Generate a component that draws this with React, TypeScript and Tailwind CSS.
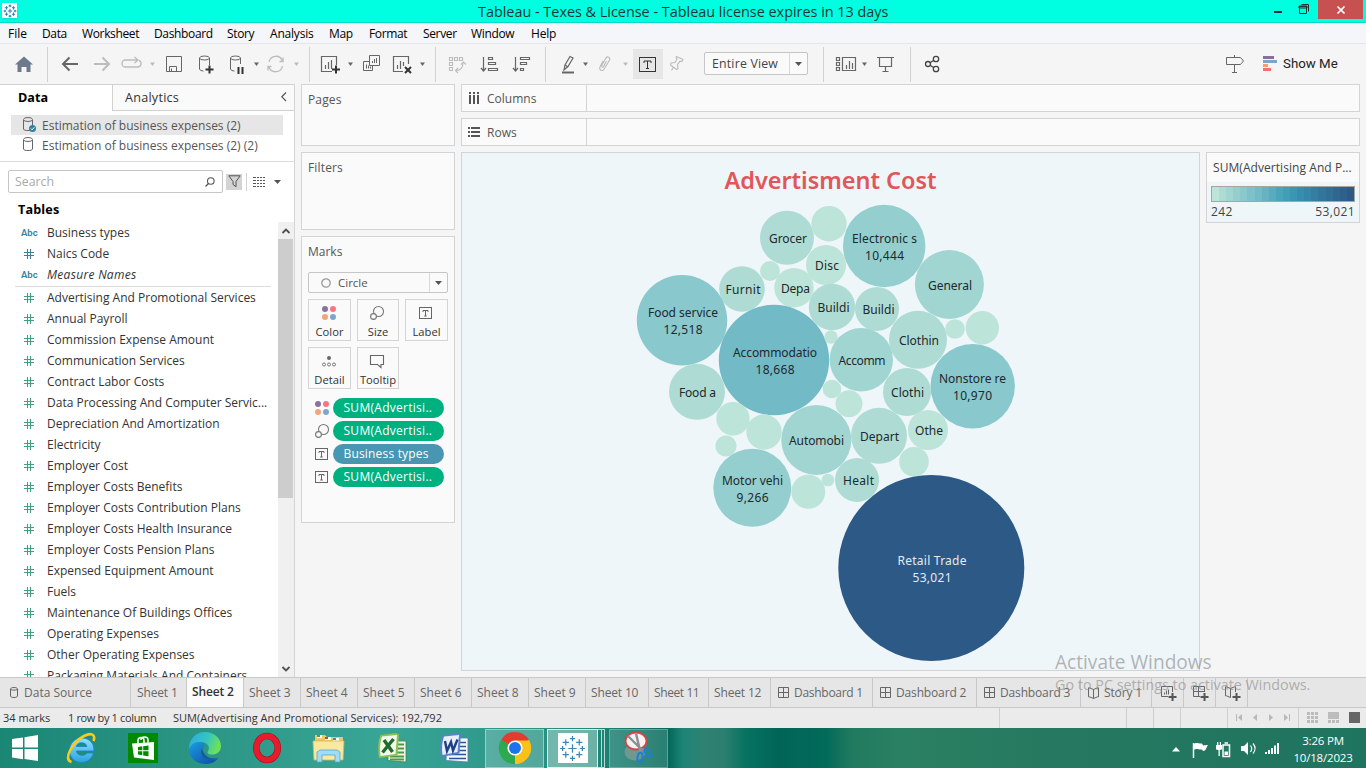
import React from "react";

type Kids = { children?: React.ReactNode };

const SANS = "font-['Open_Sans','Noto_Sans',sans-serif]";

/* ---------- shared glyphs ---------- */

function Svg({ w, h, children, className = "" }: Kids & { w: number; h: number; className?: string }) {
  return (
    <svg
      width={w}
      height={h}
      viewBox={`0 0 ${w} ${h}`}
      fill="none"
      className={`block shrink-0 overflow-visible ${className}`}
    >
      {children}
    </svg>
  );
}

function Caret({ x, muted = false }: { x: number; muted?: boolean }) {
  return <path d={`M${x} 18.500h5l-2.500 3.500z`} fill={muted ? "#bcbcbc" : "#666"} />;
}

function TextMark({ s = "#666" }: { s?: string }) {
  return (
    <Svg w={13} h={12}>
      <rect x="0.5" y="0.5" width="12" height="11" stroke={s} />
      <path d="M4 5V3.500h5V5M6.500 3.500V9M5.200 9h2.600" stroke={s} />
    </Svg>
  );
}

function SizeMark() {
  return (
    <Svg w={14} h={14}>
      <circle cx="8.500" cy="5.500" r="5" stroke="#777" strokeWidth="1.100" />
      <circle cx="3.500" cy="10.500" r="2.900" stroke="#777" strokeWidth="1.100" fill="#fafafa" />
    </Svg>
  );
}

function ColorMark() {
  return (
    <Svg w={14} h={14}>
      <circle cx="3" cy="3" r="3" fill="#8a739b" />
      <circle cx="11" cy="3" r="3" fill="#fb7485" />
      <circle cx="3" cy="11" r="3" fill="#f3a47b" />
      <circle cx="11" cy="11" r="3" fill="#80a5cc" />
    </Svg>
  );
}

function TableauMark({ size, light = false }: { size: number; light?: boolean }) {
  return (
    <svg width={size} height={size} viewBox="0 0 26 26" fill="none" className="block shrink-0">
      <path
        d="M13 9v8M9 13h8M13 1v5M10.500 3.500h5M13 20v5M10.500 22.500h5M3.500 10.500v5M1 13h5M22.500 10.500v5M20 13h5M6.500 4v6M3.500 7h6M19.500 4v6M16.500 7h6M6.500 16v6M3.500 19h6M19.500 16v6M16.500 19h6"
        stroke={light ? "#3b87b4" : "#2f7fb2"}
        strokeWidth={light ? 1.2 : 1.9}
      />
    </svg>
  );
}

/* ---------- window chrome ---------- */

function TitleBar() {
  return (
    <header className="flex h-[23px] shrink-0 border-b border-[#00dcc6] bg-[#00ffe1]">
      <div className="mt-[3px] ml-[2px] flex h-[15px] w-[15px] items-center justify-center bg-white shadow-sm">
        <TableauMark size={14} />
      </div>
      <div className="ml-[461px] w-[420px] text-[14.4px] leading-[23px] whitespace-nowrap text-[#153531]">
        Tableau - Texes &amp; License - Tableau license expires in 13 days
      </div>
      <div className="ml-auto flex">
        <Svg w={44} h={22}>
          <path d="M0 11h8v2h-8z" fill="#163431" />
          <path d="M25.500 6.500h7v7h-7z M25 6h8v2h-8z M27.500 4.500h7v7" stroke="#163431" />
        </Svg>
        <div className="flex h-[19px] w-[45px] items-center justify-center bg-[#c75050]">
          <Svg w={8} h={8}>
            <path d="M0.500 0.500l7 7M7.500 0.500l-7 7" stroke="white" strokeWidth="1.700" />
          </Svg>
        </div>
        <div className="w-[3px]" />
      </div>
    </header>
  );
}

function MenuBar() {
  return (
    <nav className="flex h-[21px] shrink-0 border-b border-[#e6e6e6] bg-[#f4f6f9] pl-2 text-[12px] leading-[21px] tracking-[-0.350px] whitespace-nowrap text-black">
      <span className="w-[34px] tracking-normal">File</span>
      <span className="w-[40px]">Data</span>
      <span className="w-[72px]">Worksheet</span>
      <span className="w-[73px]">Dashboard</span>
      <span className="w-[43px]">Story</span>
      <span className="w-[59px] tracking-[-0.2px]">Analysis</span>
      <span className="w-[40px]">Map</span>
      <span className="w-[54px]">Format</span>
      <span className="w-[48px]">Server</span>
      <span className="w-[60px]">Window</span>
      <span className="tracking-[-0.2px]">Help</span>
    </nav>
  );
}

function Sep() {
  return <div className="mt-[3px] h-[35px] w-px shrink-0 bg-[#d2d2d2]" />;
}

function ToolBar() {
  const c = "#666";
  const m = "#bcbcbc";
  return (
    <div className="flex h-[40px] shrink-0 bg-[#f5f5f5]">
      <Svg w={47} h={40}>
        <path d="M24 12.500l9 8h-2.500v7.500h-4v-5h-5v5h-4v-7.500H15z" fill="#6d7a8a" />
      </Svg>
      <Sep />
      <Svg w={108} h={40}>
        <path d="M30 20H15M21.500 13.500L15 20l6.500 6.500" stroke={c} strokeWidth="2" />
        <path d="M46 20h15M54.500 13.500L61 20l-6.500 6.500" stroke={m} strokeWidth="2" />
        <path d="M85 16h-7.500a3.500 3.500 0 0 0 0 7h12a3.500 3.500 0 0 0 1.500-6.700M83 16h6M86.500 13l3.500 3-3.500 3" stroke={m} strokeWidth="1.300" />
        <Caret x={102} muted />
      </Svg>
      <Svg w={153} h={40}>
        <path d="M10.500 12.500h15v15h-15zM13.500 27v-4.500h7v4.500M15.500 27v-2.500" stroke={c} />
        <path d="M43.500 14v11c0 1 2 2 4 2M53.500 14v7" stroke={c} />
        <ellipse cx="48.500" cy="14" rx="5" ry="2" stroke={c} />
        <path d="M53.500 21.500v8M49.500 25.500h8" stroke="#333" strokeWidth="2" />
        <path d="M74.500 14v11c0 1 2 2 4 2M84.500 14v6" stroke={c} />
        <ellipse cx="79.500" cy="14" rx="5" ry="2" stroke={c} />
        <path d="M82.500 23v7M86.500 23v7" stroke="#333" strokeWidth="2" />
        <Caret x={98} />
        <path
          d="M113 18a7 7 0 0 1 13.500-1M126.500 22a7 7 0 0 1-13.500 1M123.500 17.500h3.500v-4M115.500 22.500h-3.500v4"
          stroke={m}
          strokeWidth="1.300"
        />
        <Caret x={138} muted />
      </Svg>
      <Sep />
      <Svg w={125} h={40}>
        <path d="M26.500 21v-8.500h-15v15H22M15.500 25v-4M18.500 25v-7M21.500 25v-9" stroke={c} strokeWidth="1.200" />
        <path d="M26 21.500v8M22 25.500h8" stroke="#333" strokeWidth="2" />
        <Caret x={38} />
        <path
          d="M59.500 11.500h10v10h-10zM62.500 19v-2M64.500 19v-4M66.500 19v-5M59 17.500h-5.500v9h9V22M56.500 24.500v-4M58.500 24.500v-3M60.500 24.500v-2"
          stroke={c}
        />
        <path d="M98.500 20v-7.500h-15v15H93M87.500 25v-4M90.500 25v-8M93.500 22v-4" stroke={c} strokeWidth="1.200" />
        <path d="M95 23l6 6M101 23l-6 6" stroke="#333" strokeWidth="2" />
        <Caret x={110} />
      </Svg>
      <Sep />
      <Svg w={109} h={40}>
        <path
          d="M13.500 13.500h3v3h-3zM18.500 13.500h3v3h-3zM23.500 13.500h3v3h-3zM13.500 18.500h3v3h-3zM13.500 23.500h3v3h-3zM20 26.500c5 0 7-3 7-8M25 20.500l2.500-2.500 2.500 2.500M22 24l-2.500 2.500L22 29"
          stroke={m}
          strokeWidth="1.100"
        />
        <path d="M47.500 13v13M45 24l2.500 3 2.500-3M52.500 13.500h4v2h-4zM52.500 18.500h7v2h-7zM52.500 24.500h9v2h-9z" stroke={c} strokeWidth="1.200" />
        <path d="M79.500 13v13M77 24l2.500 3 2.500-3M84.500 13.500h9v2h-9zM84.500 18.500h6v2h-6zM84.500 24.500h3v2h-3z" stroke={c} strokeWidth="1.200" />
      </Svg>
      <Sep />
      <Svg w={87} h={40}>
        <path d="M18 26l1-5 5-8.500 3 1.500-5 8.500zM19 21l3 2" stroke={c} strokeWidth="1.200" />
        <path d="M16 28.500h12" stroke={c} strokeWidth="2" />
        <Caret x={37} />
        <path
          d="M57 17l-3 6c-1.200 3 2.300 4.800 4 2.300l5.500-9c1.200-3-2-4.500-3.700-2.200l-4 7.500c-.5 1.700 1 2 1.700 1l3-5.500"
          stroke={m}
          strokeWidth="1.100"
        />
        <Caret x={77} muted />
      </Svg>
      <div className="mt-[5px] flex h-[30px] w-[30px] shrink-0 items-center bg-[#e6e6e6] pl-[6px]">
        <Svg w={17} h={15}>
          <rect x="0.500" y="0.500" width="16" height="14" stroke="#333" />
          <path d="M5 6V4h7v2M8.500 4v7M7 11.500h3" stroke="#333" />
        </Svg>
      </div>
      <Svg w={41} h={40}>
        <path d="M13.500 12.500l6.500 3-1 2-2-.3-2.500 3.300.5 4-1.500 1-6-4.500.5-2 4-.5 2-3.500-1-1.500zM10.500 23L8.500 26.500" stroke={m} strokeWidth="1.100" />
      </Svg>
      <div className="mt-2 flex h-[23px] w-[104px] shrink-0 rounded-[2px] border border-[#c6c6c6] bg-[#fafafa]">
        <span className="flex-1 pl-[7px] text-[12.300px] leading-[21px] tracking-[0.2px] whitespace-nowrap text-[#444]">
          Entire View
        </span>
        <span className="flex w-[18px] items-center justify-center border-l border-[#d8d8d8]">
          <Svg w={7} h={4}>
            <path d="M0 0h7l-3.500 4z" fill="#555" />
          </Svg>
        </span>
      </div>
      <div className="w-[15px]" />
      <Sep />
      <Svg w={86} h={40}>
        <path
          d="M12.500 13.500h3v3h-3zM12.500 18.500h3v3h-3zM12.500 23.500h3v3h-3zM18.500 13.500h13v13h-13zM22.500 25v-4M25.500 25v-8M28.500 25v-6"
          stroke={c}
          strokeWidth="1.200"
        />
        <Caret x={38} />
        <path d="M53 13.500h17M55.500 14v8.500h12V14M61.500 23v4.500M58.500 27.500h6" stroke={c} strokeWidth="1.200" />
      </Svg>
      <Sep />
      <Svg w={40} h={40}>
        <g stroke="#444" strokeWidth="1.300">
          <circle cx="17" cy="20" r="2.500" />
          <circle cx="25" cy="15" r="2.700" />
          <circle cx="25" cy="25" r="2.700" />
          <path d="M19 18.700l4-2.500M19 21.300l4 2.500" />
        </g>
      </Svg>
      <div className="flex-1" />
      <Svg w={37} h={40}>
        <path d="M0.500 13.500h14l3 3.500-3 3.500h-14zM8.500 11v2M8.500 21v7.500M6 28.500h5" stroke={c} />
      </Svg>
      <Svg w={20} h={40}>
        <path d="M0 12h11v3H0z" fill="#8a6f9a" />
        <path d="M0 16h14v3H0z" fill="#7fa3cc" />
        <path d="M0 20h5v3H0z" fill="#f3a06f" />
        <path d="M0 24h8v3H0z" fill="#f96c7d" />
      </Svg>
      <span className="w-[83px] font-['Roboto',sans-serif] text-[13.300px] leading-[39px] whitespace-nowrap text-[#222]">
        Show Me
      </span>
    </div>
  );
}

/* ---------- data pane ---------- */

function Cylinder({ checked = false }: { checked?: boolean }) {
  return (
    <Svg w={14} h={16}>
      <path d="M0.500 3v9c0 1 2 1.500 4.500 1.500S9.500 13 9.500 12V3" stroke="#666" />
      <ellipse cx="5" cy="2.500" rx="4.500" ry="2" stroke="#666" />
      {checked && (
        <>
          <circle cx="9.500" cy="11.500" r="3.500" fill="#34809f" />
          <path d="M7.800 11.500l1.300 1.300 2.200-2.500" stroke="white" />
        </>
      )}
    </Svg>
  );
}

function Hash({ color }: { color: string }) {
  return (
    <Svg w={10} h={10}>
      <path d="M3.500 0v10M6.500 0v10M0 3.500h10M0 6.500h10" stroke={color} strokeWidth="1.050" />
    </Svg>
  );
}

function Field({ name, kind, italic = false }: { name: string; kind: "abc" | "dim" | "measure"; italic?: boolean }) {
  return (
    <li className="flex h-[21px] items-center">
      <span className="flex w-[47px] shrink-0 items-center pl-[21px]">
        {kind === "abc" && (
          <span className="pt-px font-['Roboto',sans-serif] text-[9.500px] leading-none font-semibold text-[#34809f]">
            Abc
          </span>
        )}
        {kind !== "abc" && (
          <span className="pl-[3px]">
            <Hash color={kind === "dim" ? "#3b7f9c" : "#3fa07e"} />
          </span>
        )}
      </span>
      <span className={italic ? "pt-px whitespace-nowrap italic tracking-[0.3px]" : "pt-px whitespace-nowrap"}>
        {name}
      </span>
    </li>
  );
}

const MEASURES = [
  "Advertising And Promotional Services",
  "Annual Payroll",
  "Commission Expense Amount",
  "Communication Services",
  "Contract Labor Costs",
  "Data Processing And Computer Servic...",
  "Depreciation And Amortization",
  "Electricity",
  "Employer Cost",
  "Employer Costs Benefits",
  "Employer Costs Contribution Plans",
  "Employer Costs Health Insurance",
  "Employer Costs Pension Plans",
  "Expensed Equipment Amount",
  "Fuels",
  "Maintenance Of Buildings Offices",
  "Operating Expenses",
  "Other Operating Expenses",
  "Packaging Materials And Containers",
];

function DataPane() {
  return (
    <aside className="flex h-full w-[295px] shrink-0 flex-col border-r border-[#d4d4d4] bg-white text-[12px] text-[#333]">
      <div className="flex h-[27px] shrink-0 border-t border-[#d0d0d0] leading-[25px]">
        <div className="w-[112px] pl-[18px] text-[12.600px] font-bold text-black">Data</div>
        <div className="flex flex-1 border-b border-l border-[#d0d0d0] bg-[#fafafa] pl-3 text-[12.600px] tracking-[0.250px]">
          <span>Analytics</span>
          <Svg w={6} h={10} className="mt-[7px] mr-[7px] ml-auto">
            <path d="M5 0.500L0.800 4.800 5 9" stroke="#555" strokeWidth="1.200" />
          </Svg>
        </div>
      </div>
      <div className="h-[51px] shrink-0 border-b border-[#dcdcdc] pt-[4px] text-[12px] tracking-[0px] text-[#555]">
        <div className="ml-[11px] flex h-5 w-[272px] items-center gap-[5px] bg-[#e6e6e6] pl-3">
          <Cylinder checked />
          <span className="pt-px">Estimation of business expenses (2)</span>
        </div>
        <div className="ml-[11px] flex h-5 w-[272px] items-center gap-[5px] pl-3">
          <Cylinder />
          <span className="pt-px">Estimation of business expenses (2) (2)</span>
        </div>
      </div>
      <div className="mt-2 flex h-[23px] shrink-0 items-center pl-2">
        <div className="flex h-[23px] w-[215px] items-center justify-between rounded-[2px] border border-[#c6c6c6] pr-[7px] pl-[6px] text-[12.300px] text-[#aaa]">
          <span className="pt-px">Search</span>
          <Svg w={10} h={10}>
            <circle cx="5.800" cy="4" r="3.300" stroke="#555" strokeWidth="1.100" />
            <path d="M3.500 6.500L0.500 9.500" stroke="#555" strokeWidth="1.300" />
          </Svg>
        </div>
        <div className="ml-[3px] flex h-4 w-4 items-center justify-center bg-[#d4d4d4]">
          <Svg w={13} h={13}>
            <path d="M0.800 0.800h11.400L8 6.500v5.300L5 9.500v-3z" stroke="#555" />
          </Svg>
        </div>
        <div className="ml-1 h-[18px] w-px bg-[#d4d4d4]" />
        <Svg w={12} h={10} className="ml-[6px]">
          <path d="M0 .5h12M0 3.500h12M0 6.500h12M0 9.500h12" stroke="#555" strokeDasharray="3 1 2 1 2 1 2 0" />
        </Svg>
        <Svg w={7} h={4} className="ml-[9px]">
          <path d="M0 0h7l-3.500 4z" fill="#555" />
        </Svg>
      </div>
      <div className="mt-[6px] mb-px h-[22px] shrink-0 pl-[18px] text-[12.600px] leading-[22px] font-bold tracking-[0.150px] text-black">
        Tables
      </div>
      <div className="flex min-h-0 flex-1">
        <div className="min-w-0 flex-1 overflow-hidden">
          <ul>
            <Field name="Business types" kind="abc" />
            <Field name="Naics Code" kind="dim" />
            <Field name="Measure Names" kind="abc" italic />
          </ul>
          <div className="mt-px ml-[15px] h-px w-[256px] bg-[#dcdcdc]" />
          <ul>
            {MEASURES.map((m) => (
              <Field key={m} name={m} kind="measure" />
            ))}
          </ul>
        </div>
        <div className="flex w-[16px] shrink-0 flex-col items-center bg-[#f0f0f0]">
          <Svg w={8} h={6} className="mt-[6px]">
            <path d="M0.500 5L4 1.500 7.500 5" stroke="#505050" strokeWidth="1.800" />
          </Svg>
          <div className="mt-[5px] h-[259px] w-[15px] self-start bg-[#cdcdcd]" />
          <Svg w={8} h={6} className="mt-auto mb-[5px]">
            <path d="M0.500 1L4 4.500 7.500 1" stroke="#505050" strokeWidth="1.800" />
          </Svg>
        </div>
      </div>
    </aside>
  );
}

/* ---------- cards ---------- */

const CARD = "border border-[#d4d4d4] bg-[#fafafa]";

function MarkButton({ label, children }: Kids & { label: string }) {
  return (
    <div className="flex h-[42px] flex-col items-center border border-[#d4d4d4] text-[11.200px] text-[#333]">
      <div className="flex h-[26px] items-center pr-[2px]">{children}</div>
      <span className="leading-[12px] whitespace-nowrap">{label}</span>
    </div>
  );
}

function Pill({ label, blue = false, children }: Kids & { label: string; blue?: boolean }) {
  return (
    <div className="flex h-[20px] items-center">
      <span className="flex w-[18px] shrink-0 items-center">{children}</span>
      <span
        className={
          blue
            ? "h-5 w-[111px] rounded-full bg-[#4996b2] pl-[10.500px] leading-[20px] tracking-[0.180px] text-white"
            : "h-5 w-[111px] rounded-full bg-[#00b180] pl-[10.500px] leading-[20px] tracking-[0.280px] text-white"
        }
      >
        {label}
      </span>
    </div>
  );
}

function Cards() {
  return (
    <div className="flex w-[154px] shrink-0 flex-col gap-[6px] text-[12px] text-[#555]">
      <section className={`h-[62px] pt-[6px] pl-[6px] tracking-[0.150px] ${CARD}`}>Pages</section>
      <section className={`h-[78px] pt-[6px] pl-[6px] tracking-[0.150px] ${CARD}`}>Filters</section>
      <section className={`h-[287px] px-[6px] pt-[6px] ${CARD}`}>
        <h2 className="leading-[18px]">Marks</h2>
        <div className="mt-[11px] flex h-[21px] w-[140px] items-center rounded-[2px] border border-[#c6c6c6] pl-3 text-[11.500px]">
          <Svg w={10} h={10}>
            <circle cx="5" cy="5" r="4.200" stroke="#999" strokeWidth="1.300" />
          </Svg>
          <span className="ml-[7px] flex-1">Circle</span>
          <span className="flex h-full w-[18px] items-center justify-center border-l border-[#d8d8d8]">
            <Svg w={7} h={4}>
              <path d="M0 0h7l-3.500 4z" fill="#555" />
            </Svg>
          </span>
        </div>
        <div className="mt-[6px] grid w-[140px] grid-cols-[43px_42px_43px] gap-[6px]">
          <MarkButton label="Color">
            <ColorMark />
          </MarkButton>
          <MarkButton label="Size">
            <SizeMark />
          </MarkButton>
          <MarkButton label="Label">
            <TextMark />
          </MarkButton>
          <MarkButton label="Detail">
            <Svg w={14} h={11}>
              <circle cx="7" cy="2" r="2" fill="#666" />
              <g stroke="#777">
                <circle cx="2" cy="8.500" r="1.500" />
                <circle cx="7" cy="8.500" r="1.500" />
                <circle cx="12" cy="8.500" r="1.500" />
              </g>
            </Svg>
          </MarkButton>
          <MarkButton label="Tooltip">
            <Svg w={14} h={13}>
              <path d="M0.500 0.500h13v9h-2.500v3l-3.500-3h-7z" stroke="#666" strokeWidth="1.100" />
            </Svg>
          </MarkButton>
        </div>
        <div className="mt-[9px] flex flex-col gap-[3px] pl-[7px] text-[12px]">
          <Pill label="SUM(Advertisi..">
            <ColorMark />
          </Pill>
          <Pill label="SUM(Advertisi..">
            <SizeMark />
          </Pill>
          <Pill label="Business types" blue>
            <TextMark />
          </Pill>
          <Pill label="SUM(Advertisi..">
            <TextMark />
          </Pill>
        </div>
      </section>
    </div>
  );
}

function Shelf({ label, children }: Kids & { label: string }) {
  return (
    <div className={`flex h-7 ${CARD}`}>
      <div className="flex w-[125px] items-center gap-[7px] border-r border-[#d4d4d4] pl-[6px] text-[12px] text-[#555]">
        {children}
        <span className="pt-px">{label}</span>
      </div>
    </div>
  );
}

/* ---------- bubble chart ---------- */

const PALETTE = [
  "#bce4d8", "#aedcd5", "#a1d5d2", "#95cecf", "#89c8cc", "#7ec1ca", "#72bac6", "#66b2c2", "#59acbe", "#4ba5ba",
  "#419eb6", "#3b96b2", "#358ead", "#3586a7", "#347ea1", "#32779b", "#316f96", "#2f6790", "#2d608a", "#2c5985",
];

type Bubble = {
  x: number;
  y: number;
  r: number;
  c: number;
  name?: string;
  w?: number;
  value?: string;
  tx?: number;
  ty?: number;
};

const BUBBLES: Bubble[] = [
  { x: 787, y: 237.8, r: 27, c: 1, name: "Grocer", w: 38, tx: 788, ty: 243 },
  { x: 829, y: 223.7, r: 17.7, c: 0 },
  { x: 884.2, y: 246, r: 41.2, c: 3, name: "Electronic s", w: 65, value: "10,444", tx: 884.5, ty: 243 },
  { x: 826, y: 265, r: 20, c: 0, name: "Disc", w: 24, tx: 827, ty: 270 },
  { x: 770, y: 271, r: 10, c: 0 },
  { x: 742, y: 289, r: 22.8, c: 1, name: "Furnit", w: 35, tx: 743, ty: 294 },
  { x: 794, y: 287.8, r: 19.7, c: 0, name: "Depa", w: 29, tx: 795.5, ty: 293 },
  { x: 949.4, y: 284.5, r: 34.5, c: 2, name: "General", w: 44, tx: 950, ty: 290 },
  { x: 682, y: 320.3, r: 45.2, c: 4, name: "Food service", w: 70, value: "12,518", tx: 683, ty: 317 },
  { x: 832, y: 307, r: 23.2, c: 1, name: "Buildi", w: 32, tx: 833.5, ty: 312 },
  { x: 877, y: 309, r: 22, c: 1, name: "Buildi", w: 32, tx: 878.5, ty: 314 },
  { x: 774, y: 360, r: 55.2, c: 6, name: "Accommodatio", w: 84, value: "18,668", tx: 775, ty: 357 },
  { x: 831, y: 337, r: 6.7, c: 0 },
  { x: 861.3, y: 359.7, r: 31.7, c: 2, name: "Accomm", w: 47, tx: 862, ty: 365 },
  { x: 918, y: 339.7, r: 29, c: 1, name: "Clothin", w: 40, tx: 919, ty: 345 },
  { x: 955, y: 329, r: 9.8, c: 0 },
  { x: 982.3, y: 327.8, r: 16.7, c: 0 },
  { x: 972.7, y: 386.2, r: 42.2, c: 4, name: "Nonstore re", w: 67, value: "10,970", tx: 972.5, ty: 383 },
  { x: 697, y: 391.8, r: 28, c: 1, name: "Food a", w: 37, tx: 697.5, ty: 397 },
  { x: 832, y: 389, r: 9.3, c: 0 },
  { x: 907, y: 392, r: 24, c: 1, name: "Clothi", w: 33, tx: 907.5, ty: 397 },
  { x: 849, y: 403.8, r: 13.5, c: 0 },
  { x: 733, y: 418.7, r: 16.7, c: 0 },
  { x: 764, y: 432, r: 17.7, c: 0 },
  { x: 726, y: 446, r: 10.6, c: 0 },
  { x: 816.3, y: 440, r: 35, c: 2, name: "Automobi", w: 55, tx: 816.5, ty: 445 },
  { x: 879, y: 435.8, r: 28, c: 1, name: "Depart", w: 39, tx: 879.5, ty: 441 },
  { x: 928, y: 430, r: 20, c: 0, name: "Othe", w: 28, tx: 929, ty: 435 },
  { x: 914, y: 461.7, r: 14.8, c: 0 },
  { x: 857, y: 480, r: 22, c: 1, name: "Healt", w: 31, tx: 858.5, ty: 485 },
  { x: 752.3, y: 487.8, r: 39, c: 3, name: "Motor vehi", w: 61, value: "9,266", tx: 752.5, ty: 485 },
  { x: 808.3, y: 491.8, r: 17, c: 0 },
  { x: 828, y: 480, r: 6.3, c: 0 },
  { x: 931.3, y: 568, r: 93, c: 19, name: "Retail Trade", w: 69, value: "53,021", tx: 932, ty: 565 },
];

function BubbleChart() {
  return (
    <svg
      width={737}
      height={517}
      viewBox="462 153 737 517"
      className="block font-['Noto_Sans','Open_Sans',sans-serif]"
    >
      <text x={830.5} y={189} textLength={212} fontSize={23.5} fontWeight={600} textAnchor="middle" fill="#e15759">
        Advertisment Cost
      </text>
      {BUBBLES.map((b, i) => (
        <circle key={i} cx={b.x} cy={b.y} r={b.r} fill={PALETTE[b.c]} />
      ))}
      {BUBBLES.filter((b) => b.name).map((b, i) => {
        const fill = b.c > 10 ? "#e4ebf2" : "#1c2a2c";
        return (
          <g key={i} fill={fill} fontSize={12} textAnchor="middle">
            <text x={b.tx} y={b.ty} textLength={b.w}>
              {b.name}
            </text>
            {b.value && (
              <text x={b.tx} y={(b.ty ?? 0) + 17} textLength={b.value.length > 5 ? 39 : 32}>
                {b.value}
              </text>
            )}
          </g>
        );
      })}
    </svg>
  );
}

function Legend() {
  return (
    <aside className="h-[71px] w-[154px] shrink-0 border border-[#d4d4d4] bg-[#eef6fa] text-[12px] text-[#444]">
      <div className="h-[29px] bg-[#fafafa] pl-[6px] leading-[30px] tracking-[0.060px] whitespace-nowrap">
        SUM(Advertising And P...
      </div>
      <div className="mx-1 mt-1 flex h-4 border border-[#a8a59a]">
        {PALETTE.map((p) => (
          <span key={p} className="flex-1" style={{ background: p }} />
        ))}
      </div>
      <div className="flex justify-between px-1 leading-[19px] tracking-[0.400px]">
        <span>242</span>
        <span>53,021</span>
      </div>
    </aside>
  );
}

/* ---------- bottom bars ---------- */

function GridGlyph() {
  return (
    <Svg w={11} h={11}>
      <path d="M0.500 0.500h10v10h-10zM5.500 0v11M0 5.500h11" stroke="#666" />
    </Svg>
  );
}

function BookGlyph() {
  return (
    <Svg w={11} h={12}>
      <path d="M5.500 2.500L1.500.8H.5v9h1l4 1.700 4-1.700h1v-9h-1zv9" stroke="#666" />
    </Svg>
  );
}

const TAB = "flex h-full shrink-0 items-center border-r border-[#c8c8c8] whitespace-nowrap";

function SheetTabs() {
  return (
    <div className="flex h-[31px] shrink-0 border-t border-b border-[#c8c8c8] bg-[#e6e6e6] text-[12px] tracking-[-0.150px] text-[#666]">
      <div className={`${TAB} w-[131px] gap-[6px] pl-[10px] tracking-normal`}>
        <Svg w={8} h={11}>
          <path d="M0.500 2v7c0 2 7 2 7 0V2c0-2-7-2-7 0c0 1.500 7 1.500 7 0" stroke="#666" />
        </Svg>
        Data Source
      </div>
      <div className={`${TAB} w-[56px] pl-[6px]`}>Sheet 1</div>
      <div className={`${TAB} w-[57px] bg-[#fafafa] pb-[2px] pl-[5px] font-semibold text-[#333]`}>Sheet 2</div>
      <div className={`${TAB} w-[57px] pl-[5px] tracking-normal`}>Sheet 3</div>
      <div className={`${TAB} w-[57px] pl-[5px] tracking-normal`}>Sheet 4</div>
      <div className={`${TAB} w-[57px] pl-[5px] tracking-normal`}>Sheet 5</div>
      <div className={`${TAB} w-[57px] pl-[5px] tracking-normal`}>Sheet 6</div>
      <div className={`${TAB} w-[57px] pl-[5px] tracking-normal`}>Sheet 8</div>
      <div className={`${TAB} w-[57px] pl-[5px] tracking-normal`}>Sheet 9</div>
      <div className={`${TAB} w-[63px] pl-[5px]`}>Sheet 10</div>
      <div className={`${TAB} w-[60px] pl-[5px] tracking-[-0.4px]`}>Sheet 11</div>
      <div className={`${TAB} w-[62px] pl-[5px]`}>Sheet 12</div>
      <div className={`${TAB} w-[102px] gap-[5px] pl-[7px] tracking-[-0.280px]`}>
        <GridGlyph />
        Dashboard 1
      </div>
      <div className={`${TAB} w-[104px] gap-[5px] pl-[7px]`}>
        <GridGlyph />
        Dashboard 2
      </div>
      <div className={`${TAB} w-[104px] gap-[5px] pl-[7px]`}>
        <GridGlyph />
        Dashboard 3
      </div>
      <div className={`${TAB} w-[71px] gap-[5px] pl-[7px]`}>
        <BookGlyph />
        Story 1
      </div>
      <div className={`${TAB} w-[32px] pl-[9px]`}>
        <Svg w={16} h={14}>
          <path d="M11.500 6V.5H.5v10H7M3.500 8.500v-2M5.500 8.500v-4M7.500 8.500v-5" stroke="#666" />
          <path d="M11.500 7v8M7.500 11h8" stroke="#555" strokeWidth="2" />
        </Svg>
      </div>
      <div className={`${TAB} w-[32px] pl-[9px]`}>
        <Svg w={16} h={14}>
          <path d="M11.500 6V.5H.5v10H7M5.500 0v11M0 5.500h11" stroke="#666" />
          <path d="M11.500 7v8M7.500 11h8" stroke="#555" strokeWidth="2" />
        </Svg>
      </div>
      <div className={`${TAB} w-[32px] pl-[9px]`}>
        <Svg w={16} h={14}>
          <path d="M10.500 6V.8h-1l-4 1.700L1.500.8H.5v9h1l4 1.700V2.500" stroke="#666" />
          <path d="M11.500 7v8M7.500 11h8" stroke="#555" strokeWidth="2" />
        </Svg>
      </div>
    </div>
  );
}

function StatusBar() {
  return (
    <div className="flex h-[20px] shrink-0 bg-[#ebebeb] pl-[3px] text-[11px] leading-[20px] tracking-[0.015px] whitespace-nowrap text-[#333]">
      <span className="w-[65px]">34 marks</span>
      <span className="w-[105px] tracking-[-0.350px]">1 row by 1 column</span>
      <span>SUM(Advertising And Promotional Services): 192,792</span>
      <div className="ml-auto flex">
        <span className="w-[127px] border-l border-[#cfcfcf]" />
        <span className="w-[27px] border-l border-[#cfcfcf]" />
        <span className="w-[27px] border-l border-[#cfcfcf]" />
        <span className="w-[47px] border-l border-[#cfcfcf]" />
        <span className="w-[71px] border-l border-[#cfcfcf]">
          <Svg w={70} h={20}>
            <path
              d="M8 6h1v7H8zM14 6v7l-4-3.500zM29 6v7l-4-3.500zM41 6v7l4-3.500zM56 6v7l4-3.500zM61 6h1v7h-1z"
              fill="#b8b8b8"
            />
          </Svg>
        </span>
        <span className="w-[68px] border-l border-[#cfcfcf]">
          <Svg w={67} h={20}>
            <path
              d="M8 4h3v3H8zM12 4h3v3h-3zM16 4h3v3h-3zM8 8h3v3H8zM12 8h3v3h-3zM16 8h3v3h-3zM8 12h3v3H8zM12 12h3v3h-3zM16 12h3v3h-3zM29 4h11v7H29zM29 12h3v3h-3zM33 12h3v3h-3zM37 12h3v3h-3z"
              fill="#bcbcbc"
            />
            <path d="M50 4h11v11H50z" fill="#666" />
          </Svg>
        </span>
      </div>
    </div>
  );
}

function WindowsIcon() {
  return (
    <Svg w={26} h={26}>
      <path d="M0 4l11-1.600V12.500H0zM12.500 2.200L26 0v12.500H12.500zM0 14h11v10.200L0 22.500zM12.500 14H26v12l-13.500-2z" fill="white" />
    </Svg>
  );
}

function IeIcon() {
  return (
    <Svg w={31} h={31}>
      <defs>
        <linearGradient id="ieBody" x1="0" y1="0" x2="0" y2="1">
          <stop offset="0" stopColor="#8fe0fb" />
          <stop offset="1" stopColor="#2aa3e0" />
        </linearGradient>
      </defs>
      <path
        d="M28 18H10.500c.3 4.500 7.500 6 10.500 2h6.500C26 26 21 29.500 15.500 29.500 8.500 29.500 3.500 24.500 3.500 17.500S8.500 5 16 5 28.500 10.500 28 18zM10.500 13.500h10.300c-.5-5-9.800-5-10.300 0z"
        fill="url(#ieBody)"
        stroke="#1c86c8"
        strokeWidth="0.900"
      />
      <path d="M5.500 29c-9-2 1-20 12.500-26 7-3.500 12-2 9.500 5" stroke="#f7ca24" strokeWidth="2.600" />
    </Svg>
  );
}

function StoreIcon() {
  return (
    <div className="flex h-[30px] w-[30px] items-center justify-center bg-[#008a00]">
      <Svg w={22} h={24}>
        <path d="M0 7.500l22-1.500v18L2 21.500z" fill="white" />
        <path d="M6 7V4.500C6 .5 12 .5 12 4.500V7M9 4c0-4 7-4 7 0v2.500" stroke="white" strokeWidth="1.500" />
        <path d="M6 11l4.300-.7v4H6zM11.200 10.200l5.300-.8v4.900h-5.300zM6 15.200h4.300v4L6 18.600zM11.200 15.200h5.300v5l-5.300-.8z" fill="#008a00" />
      </Svg>
    </div>
  );
}

function EdgeIcon() {
  return (
    <Svg w={32} h={32}>
      <defs>
        <linearGradient id="edgeTop" x1="0" y1="0" x2="1" y2="0.300">
          <stop offset="0" stopColor="#2aa9e8" />
          <stop offset="0.600" stopColor="#35c5c0" />
          <stop offset="1" stopColor="#6be05a" />
        </linearGradient>
        <linearGradient id="edgeLow" x1="0" y1="0" x2="1" y2="1">
          <stop offset="0" stopColor="#1b9de2" />
          <stop offset="1" stopColor="#0c4a9c" />
        </linearGradient>
      </defs>
      <path d="M16 0c9.500 0 16 6.500 16 14 0 6-4.500 8.500-9 8.500-5 0-5-2-4-3.500 3-5-2-9-7-9-6 0-11 4-12 8C-.5 8 6 0 16 0z" fill="url(#edgeTop)" />
      <path d="M0 18c1-5 6-8.500 11.500-8 3 .2 4.500 2 4 4-5 5-1.500 14 7 14 3 0 5-1 7-2C26 30.500 21 32 16.500 32 7 32 0 25 0 18z" fill="url(#edgeLow)" />
      <path d="M13 16c-3 7 3 12.500 10 12 3-.2 5.500-1.500 6.500-2.500-7 2.500-15-.5-16.500-9.500z" fill="#1559a8" />
    </Svg>
  );
}

function OperaIcon() {
  return (
    <Svg w={30} h={30}>
      <ellipse cx="15" cy="15" rx="10.800" ry="12" stroke="#a30d1b" strokeWidth="6.500" />
      <ellipse cx="15" cy="15" rx="10.800" ry="12" stroke="#e81b2c" strokeWidth="5.500" />
    </Svg>
  );
}

function ExplorerIcon() {
  return (
    <Svg w={33} h={28}>
      <path d="M3 1h10l2 2h16v23H3z" fill="#e9c762" />
      <path d="M5 1h5v3H5zM13 3h6v3h-6zM21 4h6v3h-6z" fill="#fff" />
      <path d="M5 1h3v2H5z" fill="#4aa23c" />
      <path d="M13 3h3v2h-3z" fill="#d3432f" />
      <path d="M21 4h3v2h-3z" fill="#3d86d6" />
      <path d="M1 7h31l-1 19H2z" fill="#fae7a0" stroke="#d9b856" strokeWidth="0.800" />
      <path d="M5 28V18l3-2h17l3 2v10h-5v-7H10v7z" fill="#9fdcf5" stroke="#54a8d2" strokeWidth="0.800" />
    </Svg>
  );
}

function ExcelIcon() {
  return (
    <Svg w={31} h={31}>
      <path d="M12 8h18v21l-18-1.500z" fill="#f2f7ee" stroke="#3c8a3d" strokeWidth="0.800" />
      <path d="M20 11.500h8M20 15.500h8M20 19.500h8M14 23.500h14M14 26.500h14" stroke="#4c9a48" strokeWidth="2" />
      <path d="M4.500 2L20 0l3 1.500-1.500 21L3 25C1.500 17 2 8 4.500 2z" fill="#8cc152" />
      <path d="M6 3.500L21 2l-1.500 19L4.500 23C3.500 16 4 9 6 3.500z" fill="#f3f9ec" />
      <path d="M8 7l8.500 12M17.500 6L6.500 19.500" stroke="#1f6b2c" strokeWidth="3.400" />
    </Svg>
  );
}

function WordIcon() {
  return (
    <Svg w={31} h={31}>
      <path d="M9 5h21v24L8 27.500z" fill="#f4f7fc" stroke="#5578b5" strokeWidth="0.800" />
      <path d="M21 9.500h7M21 13.500h7M21 17.500h7M11 21.500h17M11 25.500h17" stroke="#2b579a" strokeWidth="1.600" />
      <path d="M4.500 2L20 0l3 1.500-1.500 19L3 24C1.500 16 2 8 4.500 2z" fill="#5b83c6" />
      <path d="M6 3.500L21 2l-1.500 17L4.500 22C3.500 16 4 9 6 3.500z" fill="#e8effa" />
      <path d="M7 8l2 10 4-9 2 8.500 4.500-11" stroke="#1f3f86" strokeWidth="2.400" />
    </Svg>
  );
}

function ChromeIcon() {
  return (
    <Svg w={32} h={32}>
      <path d="M16 16L2.100 8A16 16 0 0 1 29.900 8z" fill="#e33b2e" />
      <path d="M16 16L29.900 8A16 16 0 0 1 16 32z" fill="#fbc116" />
      <path d="M16 16v16A16 16 0 0 1 2.100 8z" fill="#2da94f" />
      <path d="M16 8.500h14.100A16 16 0 0 1 16 32l6.500-12z" fill="#fbc116" />
      <path d="M2.100 8L9.500 19.800l6.500 4L16 32A16 16 0 0 1 2.100 8z" fill="#2da94f" />
      <circle cx="16" cy="16" r="7.600" fill="white" />
      <circle cx="16" cy="16" r="6" fill="#1a73e8" />
    </Svg>
  );
}

function SnipIcon() {
  return (
    <Svg w={30} h={32}>
      <ellipse cx="11" cy="20" rx="10.500" ry="8.500" fill="#7a9a94" opacity="0.850" />
      <ellipse cx="12" cy="9" rx="10.500" ry="8.500" fill="#f7f3f3" stroke="#d64545" strokeWidth="1.800" />
      <path d="M4 4l15 15M12 1.500l4.500 19" stroke="#8b8f94" strokeWidth="2.400" />
      <ellipse cx="16" cy="25.500" rx="2.500" ry="4.800" stroke="#1d7fd0" strokeWidth="2" transform="rotate(8 16 25.500)" />
      <ellipse cx="24" cy="21" rx="2.500" ry="4.800" stroke="#1d7fd0" strokeWidth="2" transform="rotate(-35 24 21)" />
    </Svg>
  );
}

function TaskBar() {
  return (
    <footer className="flex h-[40px] shrink-0 items-center bg-[linear-gradient(90deg,#1a8674_0%,#2b9584_14%,#38a596_28%,#2f9a8c_36%,#23897a_43%,#05695b_49%,#1d8577_50%,#2e8272_51.500%,#2c7f6f_53%,#087362_54.500%,#006557_57%,#036b5a_60.500%,#227b5f_62.500%,#2a8062_66%,#26795f_76%,#1f7460_100%)] text-white">
      <div className="ml-3 w-[54px]">
        <WindowsIcon />
      </div>
      <div className="w-[62px]">
        <IeIcon />
      </div>
      <div className="w-[61px]">
        <StoreIcon />
      </div>
      <div className="w-[63px]">
        <EdgeIcon />
      </div>
      <div className="w-[60px]">
        <OperaIcon />
      </div>
      <div className="w-[64px]">
        <ExplorerIcon />
      </div>
      <div className="w-[62px]">
        <ExcelIcon />
      </div>
      <div className="w-[47px]">
        <WordIcon />
      </div>
      <div className="flex h-[39px] w-[59px] items-center justify-center border border-white/40 bg-white/20">
        <ChromeIcon />
      </div>
      <div className="ml-[3px] flex h-[39px] w-[51px] items-center justify-center border border-white/80 bg-white/35">
        <div className="flex h-[30px] w-[30px] items-center justify-center bg-white">
          <TableauMark size={27} light />
        </div>
      </div>
      <div className="h-[39px] w-[4px] border-y border-r border-white/70" />
      <div className="h-[39px] w-[3px] border-y border-r border-white/70" />
      <div className="ml-[4px] flex h-[39px] w-[59px] items-center justify-center border border-white/25 bg-white/15">
        <SnipIcon />
      </div>
      <div className="ml-auto flex items-center">
        <Svg w={108} h={40}>
          <path d="M0 23.500h8l-4-4.500z" fill="white" />
          <path d="M21.500 15v15" stroke="white" strokeWidth="1.500" />
          <path d="M22 15.500c3-1.500 5 .5 8 0l1 2c2-.3 3-.5 5-.5-2 3-2 6-5 6l-1-1.500c-3 .5-5-1.500-8 0z" fill="white" />
          <path d="M51 17h6.500v11.500H51zM52.500 15h3.500" stroke="white" strokeWidth="1.500" />
          <path d="M52.500 23.500H56V27h-3.500zM44 17h6v4c0 1.500-6 1.500-6 0zM45 14h1.300v3H45zM47.800 14H49v3h-1.200zM46.500 21h1.300v7h-1.300z" fill="white" />
          <path d="M69 18h3l4-4v13l-4-4h-3z" fill="white" />
          <path d="M78.500 17.500c1.500 2 1.500 4.500 0 6.500M81 15.500c2.500 3 2.500 7 0 10" stroke="white" strokeWidth="1.200" />
          <path d="M93 24h2v2h-2zM96 22h2v4h-2zM99 20h2v6h-2zM102 17.500h2V26h-2zM105 15h2v11h-2z" fill="white" />
        </Svg>
        <div className="mr-[8px] ml-2 w-[70px] pt-px text-center text-[11.500px] leading-[17px] tracking-[-0.200px] whitespace-nowrap">
          <div>3:26 PM</div>
          <div>10/18/2023</div>
        </div>
      </div>
    </footer>
  );
}

export default function App() {
  return (
    <div
      className={`relative flex h-[768px] w-[1366px] flex-col overflow-hidden bg-[#f5f5f5] ${SANS}`}
    >
      <TitleBar />
      <MenuBar />
      <ToolBar />
      <main className="flex min-h-0 flex-1">
        <DataPane />
        <div className="flex flex-1 gap-[6px] pl-[6px]">
          <Cards />
          <div className="flex w-[899px] flex-col gap-[6px]">
            <Shelf label="Columns">
              <Svg w={12} h={12}>
                <path d="M1 0h2v2H1zM5 0h2v2H5zM9 0h2v2H9zM1 3h2v9H1zM5 3h2v9H5zM9 3h2v9H9z" fill="#555" />
              </Svg>
            </Shelf>
            <Shelf label="Rows">
              <Svg w={12} h={12}>
                <path d="M0 1h2v2H0zM0 5h2v2H0zM0 9h2v2H0zM3 1h9v2H3zM3 5h9v2H3zM3 9h9v2H3z" fill="#555" />
              </Svg>
            </Shelf>
            <div className="flex gap-[6px]">
              <div className="h-[519px] w-[739px] border border-[#d4d4d4] bg-[#eef6fa]">
                <BubbleChart />
              </div>
              <Legend />
            </div>
          </div>
        </div>
      </main>
      <SheetTabs />
      <StatusBar />
      <TaskBar />
      <div className="pointer-events-none absolute top-[650px] left-[1055px] whitespace-nowrap text-[#8c8c8c]/65">
        <div className="text-[19.100px] leading-[24px]">Activate Windows</div>
        <div className="text-[14.350px] leading-[22px]">Go to PC settings to activate Windows.</div>
      </div>
    </div>
  );
}
